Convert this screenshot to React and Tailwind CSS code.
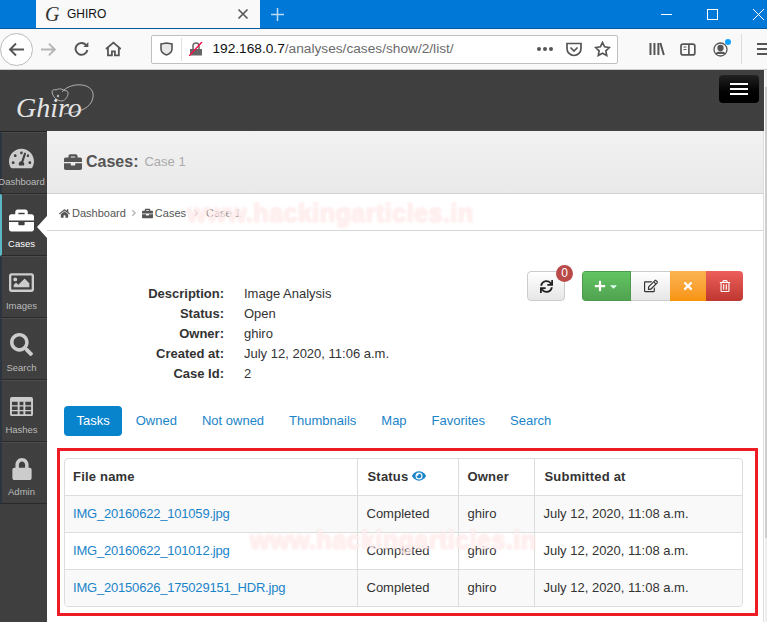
import React from 'react';
import { FaTachometerAlt, FaBriefcase, FaRegImage, FaSearch, FaLock, FaHome, FaSync, FaPlus, FaCaretDown, FaRegEdit, FaTimes, FaRegTrashAlt, FaEye, FaAngleRight } from 'react-icons/fa';

function GridIcon({ size, className }) {
  return (
    <svg className={className} width={size} height={(size * 20) / 24} viewBox="0 0 24 20" fill="currentColor">
      <path fillRule="evenodd" d="M2 0h20a2 2 0 0 1 2 2v16a2 2 0 0 1-2 2H2a2 2 0 0 1-2-2V2a2 2 0 0 1 2-2zM2 5v3.500h6V5zm8 0v3.500h4V5zm6 0v3.500h6V5zM2 10v3.500h6V10zm8 0v3.500h4V10zm6 0v3.500h6V10zM2 15v3h6v-3zm8 0v3h4v-3zm6 0v3h6v-3z" />
    </svg>
  );
}

const nav = [
  { label: 'Dashboard', icon: FaTachometerAlt, size: 25 },
  { label: 'Cases', icon: FaBriefcase, size: 25, active: true },
  { label: 'Images', icon: FaRegImage, size: 25 },
  { label: 'Search', icon: FaSearch, size: 23 },
  { label: 'Hashes', icon: GridIcon, size: 23 },
  { label: 'Admin', icon: FaLock, size: 22 },
];

const details = [
  ['Description:', 'Image Analysis'],
  ['Status:', 'Open'],
  ['Owner:', 'ghiro'],
  ['Created at:', 'July 12, 2020, 11:06 a.m.'],
  ['Case Id:', '2'],
];

const tabs = ['Owned', 'Not owned', 'Thumbnails', 'Map', 'Favorites', 'Search'];

const files = ['IMG_20160622_101059.jpg', 'IMG_20160622_101012.jpg', 'IMG_20150626_175029151_HDR.jpg'];

const darkBg = 'bg-[#3f3f3f] bg-[linear-gradient(#4442_1px,transparent_1px),linear-gradient(90deg,#4442_1px,transparent_1px)] bg-[length:4px_4px]';

function Watermark({ className }) {
  return (
    <div className={`absolute font-["Liberation_Sans",sans-serif] text-[25px] font-bold leading-none tracking-[0.5px] text-[#fff4f4]/60 [text-shadow:0_0_2px_#ffd8d830,1px_1px_2px_#ffd8d830,-1px_-1px_2px_#ffd8d830,1px_-1px_2px_#ffd8d830,-1px_1px_2px_#ffd8d830] pointer-events-none ${className}`}>
      www.hackingarticles.in
    </div>
  );
}

function BrowserChrome() {
  return (
    <div className="shrink-0 font-['Open_Sans',sans-serif]">
      <div className="h-[29px] bg-[#0078d7] flex items-stretch border-b border-[#005a9e]">
        <div className="w-9" />
        <div className="w-[224px] bg-[#f9f9fa] flex items-center pl-[9px] pr-[11px]">
          <span className="w-[20px] font-['Liberation_Serif',serif] italic text-[20px] leading-none text-[#333]">G</span>
          <span className="ml-[2px] text-[12px] text-[#111] flex-1 font-['Liberation_Sans',sans-serif]">GHIRO</span>
          <svg width="12" height="12" viewBox="0 0 12 12" stroke="#555" strokeWidth="1.6"><path d="M1.5 1.5l9 9M10.5 1.5l-9 9" /></svg>
        </div>
        <div className="flex items-center pl-[10px]">
          <svg width="15" height="15" viewBox="0 0 15 15" stroke="#b8daf4" strokeWidth="1.5"><path d="M7.5 1v13M1 7.5h13" /></svg>
        </div>
        <div className="flex-1" />
        <div className="flex items-center text-white">
          <div className="w-[46px] flex justify-center"><svg width="11" height="11" viewBox="0 0 11 11" stroke="#fff"><path d="M0 5.5h11" /></svg></div>
          <div className="w-[46px] flex justify-center"><svg width="11" height="11" viewBox="0 0 11 11" stroke="#fff" fill="none"><rect x="0.5" y="0.5" width="10" height="10" /></svg></div>
          <div className="w-[32px] pl-[18px]"><svg width="11" height="11" viewBox="0 0 11 11" stroke="#fff"><path d="M0 0l11 11M11 0L0 11" /></svg></div>
        </div>
      </div>
      <div className="h-[41px] bg-[#f9f9fa] border-b border-[#ccc] flex items-center">
        <div className="w-[33px] h-[33px] rounded-full border border-[#bbb] bg-white flex items-center justify-center shrink-0">
          <svg width="17" height="15" viewBox="0 0 17 15" fill="none" stroke="#555" strokeWidth="1.9"><path d="M16 7.5H2M8 1.5l-6 6 6 6" /></svg>
        </div>
        <svg className="ml-[7px]" width="17" height="15" viewBox="0 0 17 15" fill="none" stroke="#b5b5b5" strokeWidth="1.9"><path d="M1 7.5h14M9 1.5l6 6-6 6" /></svg>
        <svg className="ml-[17px]" width="16" height="16" viewBox="0 0 16 16" fill="none" stroke="#555" strokeWidth="2"><path d="M13.5 9a6 6 0 1 1-1.3-5" /><path d="M14.5 1v5h-5" fill="#555" stroke="none" /></svg>
        <svg className="ml-[15px]" width="17" height="16" viewBox="0 0 17 16" fill="none" stroke="#555" strokeWidth="1.8"><path d="M1 8l7.5-6.500L16 8" /><path d="M3 7v7.500h4v-4h3v4h4V7" /></svg>
        <div className="ml-[30px] w-[467px] h-[29px] bg-white border border-[#c0c0c0] rounded-[2px] flex items-center shrink-0">
          <svg className="ml-[8px]" width="13" height="14" viewBox="0 0 13 14" fill="#e8e8e8" stroke="#555" strokeWidth="1.6"><path d="M1 2l5.500-1L12 2v5c0 3-2.500 5-5.500 6C3.500 12 1 10 1 7z" /></svg>
          <div className="w-px h-[23px] bg-[#e0e0e0] ml-[8px]" />
          <svg className="ml-[7px]" width="14" height="14" viewBox="0 0 14 14"><path d="M1 7h12v6.500H1z" fill="#666" /><path d="M4 7V4a3 3 0 0 1 6 0v3" fill="none" stroke="#666" strokeWidth="1.500" /><path d="M0 14L13 0" stroke="#f0134d" strokeWidth="1.500" /></svg>
          <span className="ml-[9px] text-[13.7px] leading-none text-[#111] font-['Liberation_Sans',sans-serif] whitespace-nowrap">192.168.0.7<span className="text-[#6b6b6b]">/analyses/cases/show/2/list/</span></span>
          <div className="flex-1" />
          <span className="flex gap-[2px] mr-[13px]">
            <i className="w-[4px] h-[4px] rounded-full bg-[#555]" /><i className="w-[4px] h-[4px] rounded-full bg-[#555]" /><i className="w-[4px] h-[4px] rounded-full bg-[#555]" />
          </span>
          <svg className="mr-[12px]" width="16" height="15" viewBox="0 0 16 15" fill="none" stroke="#555" strokeWidth="1.7"><path d="M1 1.500h14v5a7 7 0 0 1-14 0z" /><path d="M4.500 5.500L8 9l3.500-3.500" /></svg>
          <svg className="mr-[6px]" width="17" height="16" viewBox="0 0 17 16" fill="none" stroke="#555" strokeWidth="1.700"><path d="M8.500 1.500l2.100 4.300 4.700.7-3.400 3.300.8 4.700-4.200-2.200-4.200 2.200.8-4.700L1.700 6.500l4.700-.7z" /></svg>
        </div>
        <svg className="ml-[31px]" width="16" height="14" viewBox="0 0 16 14" fill="none" stroke="#555" strokeWidth="2"><path d="M1.500 1v12M5.500 1v12M9.500 1v12M11.500 1l3.500 12" /></svg>
        <svg className="ml-[15px]" width="16" height="13" viewBox="0 0 16 13" fill="none" stroke="#555" strokeWidth="1.700"><rect x="1" y="1" width="14" height="11" rx="2" /><path d="M9 1v11" /><path d="M3.500 4H6.500M3.500 6.500H6.500" strokeWidth="1" /></svg>
        <div className="relative ml-[17px]">
          <svg width="15" height="15" viewBox="0 0 15 15" fill="none" stroke="#555" strokeWidth="1.300"><circle cx="7.500" cy="7.500" r="6.500" /><circle cx="7.500" cy="6" r="2.500" fill="#555" /><path d="M3 12c1-2.500 8-2.500 9 0" fill="#555" /></svg>
          <span className="absolute -top-[3px] -right-[3px] w-[6px] h-[6px] rounded-full bg-[#0fa5ff]" />
        </div>
        <div className="w-px h-[30px] bg-[#ddd] ml-[13px]" />
        <div className="ml-[15px] flex flex-col gap-[3px] w-[10px]">
          <i className="h-[2px] bg-[#555]" /><i className="h-[2px] bg-[#555]" /><i className="h-[2px] bg-[#555]" />
        </div>
      </div>
    </div>
  );
}

function Logo() {
  return (
    <div className="relative w-[80px] h-[40px] ml-[16px] mt-[14px]">
      <svg className="absolute left-[34px] top-0" width="46" height="34" viewBox="0 0 46 34" fill="none" stroke="#ccc" strokeWidth="0.800">
        <path d="M12 8C16 3 24 0 32 1c8 1 12 6 11 12-1 8-8 13-18 15l-11 2" />
        <path d="M2 8c0-2 2-3 4-2 3-2 7-1 9 1 1-1 3 0 3 2 0 3-2 7-6 8-4 0-9-3-10-9z" />
        <circle cx="8" cy="12" r="0.800" fill="#ccc" />
      </svg>
      <span className="absolute left-0 bottom-[2px] font-['Liberation_Serif',serif] italic text-[28px] leading-none text-[#e4e4e4]">Ghiro</span>
    </div>
  );
}

function Sidebar() {
  return (
    <div className={`w-[47px] shrink-0 ${darkBg} border-t border-[#222]`}>
      {nav.map(({ label, icon: Icon, size, active }) => (
        <div key={label} className={`relative h-[62px] pr-[6px] border-b border-[#2a2a2a] border-t border-t-[#4c4c4c] border-l-2 flex flex-col items-center ${active ? 'border-l-[#5bb8c4]' : 'border-l-[#2c3440]'}`}>
          <div className="h-[27px] mt-[12px] flex items-center justify-center">
            <Icon className={active ? 'text-white' : 'text-[#ccc]'} size={size} />
          </div>
          <span className={`mt-[3px] text-[9.5px] leading-[14px] whitespace-nowrap ${active ? 'text-white' : 'text-[#bbb]'}`}>{label}</span>
          {active && <span className="absolute right-0 top-[21px] w-0 h-0 border-y-[11px] border-y-transparent border-r-[10px] border-r-white" />}
        </div>
      ))}
    </div>
  );
}

function Toolbar() {
  return (
    <div className="flex items-start">
      <div className="relative w-[38px] h-[30px] rounded-[4px] border border-[#ccc] bg-gradient-to-b from-white to-[#e6e6e6] flex items-center justify-center">
        <FaSync size={13} className="text-[#222]" />
        <span className="absolute -top-[7px] -right-[9px] w-[17px] h-[17px] rounded-full bg-[#b94a48] text-white text-[12px] leading-[17px] text-center">0</span>
      </div>
      <div className="ml-[17px] flex h-[30px] rounded-[4px] overflow-hidden">
        <div className="w-[49px] flex items-center justify-center gap-[2px] bg-gradient-to-b from-[#62c462] to-[#51a351] text-white border border-[#4c9a4c]">
          <FaPlus size={12} /><FaCaretDown size={11} className="text-[#dfe]" />
        </div>
        <div className="w-[39px] flex items-center justify-center bg-gradient-to-b from-white to-[#e6e6e6] border-y border-[#ccc] text-[#333]"><FaRegEdit size={14} /></div>
        <div className="w-[36px] flex items-center justify-center bg-gradient-to-b from-[#fbb450] to-[#f89406] text-white"><FaTimes size={12} /></div>
        <div className="w-[37px] flex items-center justify-center bg-gradient-to-b from-[#ee5f5b] to-[#bd362f] text-white"><FaRegTrashAlt size={12} /></div>
      </div>
    </div>
  );
}

function FilesTable() {
  const td = 'border-t border-l first:border-l-0 first:pl-2 border-[#ddd] pl-[9px] pr-2 h-[37px] align-middle';
  return (
    <div className="border-[3px] border-[#ed1c24] mt-[12px] ml-[10px] mr-[5px] pt-[7px] pl-[4px] pr-[12px] pb-[6px]">
      <div className="border border-[#ddd] rounded-[4px] overflow-hidden">
        <table className="w-full border-collapse table-fixed text-[13px] text-[#333]">
          <colgroup><col className="w-[292px]" /><col className="w-[101px]" /><col className="w-[76px]" /><col /></colgroup>
          <thead>
            <tr className="tracking-[0.2px]">
              <th className="pl-2 h-[36px] text-left font-bold">File name</th>
              <th className="border-l border-[#ddd] pl-[10px] text-left font-bold">Status <FaEye size={14} className="inline text-[#1a84c9] align-[-2px]" /></th>
              <th className="border-l border-[#ddd] pl-[9px] text-left font-bold">Owner</th>
              <th className="border-l border-[#ddd] pl-[10px] text-left font-bold">Submitted at</th>
            </tr>
          </thead>
          <tbody>
            {files.map((name, i) => (
              <tr key={name} className={i === 1 ? 'bg-white' : 'bg-[#f9f9f9]'}>
                <td className={`${td} text-[#1a84c9] tracking-[-0.2px]`}>{name}</td>
                <td className={td}>Completed</td>
                <td className={td}>ghiro</td>
                <td className={td}>July 12, 2020, 11:08 a.m.</td>
              </tr>
            ))}
          </tbody>
        </table>
      </div>
    </div>
  );
}

export default function App() {
  return (
    <div className="relative w-[767px] h-[622px] overflow-hidden bg-white flex flex-col font-['Liberation_Sans',sans-serif]">
      <BrowserChrome />
      <div className="flex-1 flex min-h-0">
        <div className="flex-1 flex flex-col min-w-0">
          <div className={`h-[61px] shrink-0 ${darkBg} flex justify-between items-start`}>
            <Logo />
            <div className="mt-[5px] mr-[5px] w-[40px] h-[28px] rounded-[4px] bg-gradient-to-b from-[#222] to-black flex flex-col items-center justify-center gap-[3px]">
              <i className="w-[18px] h-[2px] bg-white" /><i className="w-[18px] h-[2px] bg-white" /><i className="w-[18px] h-[2px] bg-white" />
            </div>
          </div>
          <div className="flex-1 flex min-h-0">
            <Sidebar />
            <div className="flex-1 min-w-0 flex flex-col border-r border-[#ddd]">
              <div className="h-[63px] bg-gradient-to-b from-[#f2f2f2] to-[#e9e9e9] border-b border-[#d0d0d0] flex items-center pl-[17px] text-[#555] shrink-0">
                <FaBriefcase size={18} />
                <span className="ml-[4px] text-[16px] font-bold">Cases:</span>
                <span className="ml-[6px] text-[13px] text-[#aaa]">Case 1</span>
              </div>
              <div className="h-[37px] border-b border-[#d5d5d5] flex items-center pl-[12px] pt-[2px] text-[11px] text-[#555] shrink-0">
                <FaHome size={11} /><span className="ml-[2px]">Dashboard</span>
                <FaAngleRight size={10} className="mx-[3px] text-[#bbb]" />
                <FaBriefcase size={11} /><span className="ml-[2px]">Cases</span>
                <FaAngleRight size={10} className="mx-[5px] text-[#bbb]" />
                <span className="text-[#777]">Case 1</span>
              </div>
              <div className="flex items-start justify-between mt-[40px] pr-[20px]">
                <div className="mt-[13px] text-[13px] leading-[20px] text-[#333] grid grid-cols-[177px_auto] gap-x-[20px]">
                  {details.map(([k, v]) => (
                    <React.Fragment key={k}>
                      <span className="text-right font-bold">{k}</span>
                      <span>{v}</span>
                    </React.Fragment>
                  ))}
                </div>
                <Toolbar />
              </div>
              <div className="flex mt-[22px] ml-[17px] gap-[2px] text-[13px] text-[#1a84c9] leading-[20px]">
                <span className="px-[12.5px] py-[5px] rounded-[4px] bg-[#0784cc] text-white">Tasks</span>
                {tabs.map(t => <span key={t} className="px-[11.5px] py-[5px]">{t}</span>)}
              </div>
              <FilesTable />
            </div>
          </div>
        </div>
        <div className="w-[3px] shrink-0 bg-white pl-px">
          <div className="h-full bg-[#eee] pt-[17px]">
            <div className="h-[451px] bg-[#cdcdcd]" />
          </div>
        </div>
      </div>
      <Watermark className="left-[187px] top-[201px]" />
      <Watermark className="left-[250px] top-[528px]" />
    </div>
  );
}
